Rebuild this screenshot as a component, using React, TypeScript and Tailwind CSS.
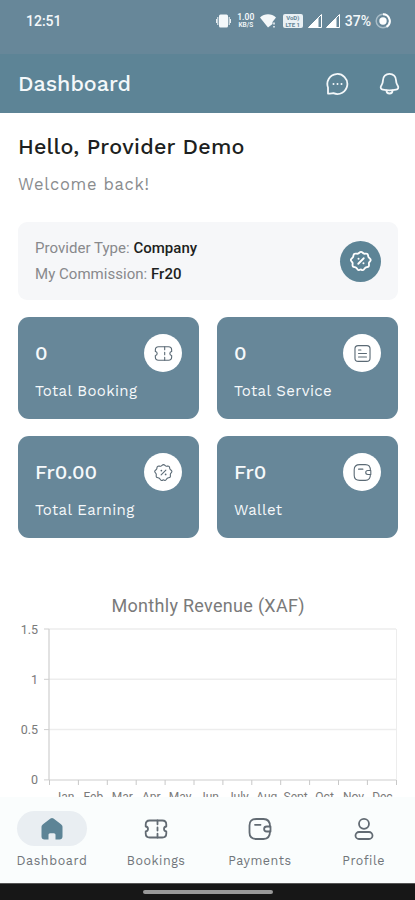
import type { ReactNode } from 'react'

const font = "font-['Work_Sans',Inter,sans-serif]"

function Icon({ size = 24, stroke = 1.5, children }: { size?: number; stroke?: number; children: ReactNode }) {
  return (
    <svg width={size} height={size} viewBox="0 0 24 24" fill="none" stroke="currentColor"
      strokeWidth={stroke} strokeLinecap="round" strokeLinejoin="round">
      {children}
    </svg>
  )
}

const ticket = (
  <>
    <path d="M20 12c0-1.300.8-2.300 2.300-2.500V7.500c0-2.500-1-4-4-4H5.700c-3 0-4 1.500-4 4v2C3.200 9.700 4 10.700 4 12s-.8 2.300-2.300 2.500v2c0 2.500 1 4 4 4h12.600c3 0 4-1.500 4-4v-2c-1.500-.2-2.300-1.200-2.300-2.500z" />
    <path d="M13.500 3.500v3.800M13.500 10.500v3M13.500 16.700v3.800" />
  </>
)

const discount = (
  <>
    <path d="M12 2c1.500 0 2 1.600 3.300 2s2.600-.6 3.700.3.500 2.500 1.300 3.600 2.300 1.500 2.300 2.900-1.500 1.900-1.900 3.200.6 2.700-.3 3.800-2.500.7-3.600 1.500-1.400 2.500-2.800 2.700-1.600-.9-2-.9-1.200 1.100-2.600.9-1.600-1.900-2.700-2.700-2.700-.4-3.600-1.500.1-2.500-.3-3.800-1.900-1.800-1.900-3.200 1.500-1.800 2.300-2.900.2-2.700 1.300-3.600S7.400 4.400 8.700 4 10.500 2 12 2z" />
    <path d="M9 15l6-6" />
    <path d="M14.700 14.500h.01M9.300 9.500h.01" strokeWidth="2.200" />
  </>
)

const wallet = (
  <>
    <path d="M12.500 7.800H7" />
    <path d="M22.500 9.500v5h-3.700c-1.500 0-2.700-1-2.700-2.500s1.200-2.500 2.700-2.500h3.700z" />
    <path d="M22 9.500c0-5-1.500-7.500-6.500-7.500h-7c-5 0-7 2-7 6.500v7c0 4.500 2 6.500 7 6.500h7c5 0 6.500-2.500 6.500-7.500" />
  </>
)

const note = (
  <>
    <rect x="2.500" y="2" width="19" height="20" rx="4" />
    <path d="M7 7.500h3M7 12h10M7 16.500h10" />
  </>
)

const stats = [
  { value: '0', label: 'Total Booking', icon: ticket },
  { value: '0', label: 'Total Service', icon: note },
  { value: 'Fr0.00', label: 'Total Earning', icon: discount },
  { value: 'Fr0', label: 'Wallet', icon: wallet },
]

const months = ['Jan', 'Feb', 'Mar', 'Apr', 'May', 'Jun', 'July', 'Aug', 'Sept', 'Oct', 'Nov', 'Dec']
const ticks = ['1.5', '1', '0.5', '0']

function StatusBar() {
  return (
    <div className="flex h-[54px] items-start justify-between bg-[#678799] pt-[11px] pr-[24px] pl-[26px] text-[#f4f8fa]">
      <span className="font-[Roboto,sans-serif] text-[14px] leading-5 font-medium">12:51</span>
      <div className="flex h-[19px] items-center">
        <svg width="15" height="14" viewBox="0 0 15 14" fill="currentColor">
          <rect x="3" y="0.500" width="9" height="13" rx="1.500" />
          <path d="M1.800 3v8M13.200 3v8M.4 5v4M14.600 5v4" stroke="currentColor" />
        </svg>
        <div className="ml-[6px] flex w-[18px] flex-col items-center font-[Roboto,sans-serif] font-semibold">
          <span className="text-[8.500px] leading-[9px]">1.00</span>
          <span className="text-[6.500px] leading-[6px]">KB/S</span>
        </div>
        <svg className="ml-[5px]" width="17" height="14" viewBox="0 0 17 14" fill="currentColor">
          <path d="M0 3.500C4.500-.8 11.500-.8 16 3.500L12.500 8v2L8 13.500z" />
          <path d="M14 8.500v2M14 12v1.500" stroke="currentColor" strokeWidth="1.500" />
        </svg>
        <div className="ml-[6px] flex h-[14px] w-[20px] flex-col items-center justify-center rounded-[2px] bg-[#e9f0f4] font-[Roboto,sans-serif] text-[6px] leading-[7px] font-bold text-[#678799]">
          <span>VoD)</span>
          <span>LTE 1</span>
        </div>
        {[0, 1].map(i => (
          <svg key={i} className={i === 0 ? 'ml-[5px]' : 'ml-[4px]'} width="14" height="14" viewBox="0 0 14 14">
            <path d="M13.500.5v13H.5z" fill="none" stroke="white" />
            <path d="M10.500 3.500v10H.5z" fill="white" />
          </svg>
        ))}
        <span className="ml-[5px] font-[Roboto,sans-serif] text-[14px] leading-5 font-medium">37%</span>
        <svg className="ml-[4px]" width="16" height="16" viewBox="0 0 16 16" fill="none">
          <circle cx="8" cy="8" r="6.800" stroke="#a9bdc8" strokeWidth="1.500" />
          <path d="M8 1.200A6.800 6.800 0 0 1 11.500 13.800" stroke="white" strokeWidth="2" />
          <circle cx="8" cy="8" r="3.700" fill="white" />
        </svg>
      </div>
    </div>
  )
}

function Header() {
  return (
    <header className="flex h-[59px] items-center justify-between bg-[#5d8496] pr-[14px] pl-[18px] text-[#f4f8fa]">
      <h1 className="pt-[2px] text-[21.500px] font-medium">Dashboard</h1>
      <div className="flex items-center gap-[28px]">
        <Icon stroke={1.8}>
          <path d="M3 21.500V15.500A10 10 0 1 1 8.500 21.200C7 21.600 5 21.600 3 21.500z" />
          <path d="M8.500 12h.01M12.500 12h.01M16.500 12h.01" strokeWidth="2" />
        </Icon>
        <Icon stroke={1.8}>
          <path d="M12.500 1.800C8.700 1.800 6 4.600 6 8.300c0 2.700-.8 3.900-1.800 5.500-1.100 1.800-.3 3.500 1.800 3.900 4.300.8 8.700.8 13 0 2.100-.4 2.900-2.100 1.800-3.900-1-1.600-1.800-2.800-1.800-5.500 0-3.700-2.700-6.500-6.500-6.500z" />
          <path d="M15.500 18.500c0 1.800-1.300 3-3 3s-3-1.200-3-3" />
        </Icon>
      </div>
    </header>
  )
}

function RevenueChart() {
  return (
    <svg className="-mx-[18px] block" width="415" height="235" fontFamily="Roboto, sans-serif" fill="#7a7a7a">
      <text x="208" y="34" fontSize="18" textAnchor="middle" textLength="193">Monthly Revenue (XAF)</text>
      {ticks.map((t, i) => (
        <g key={t}>
          <path d={`M49 ${51 + i * 50.3}H396`} stroke={i === 3 ? '#dedede' : '#ededed'} strokeWidth="1.500" />
          <path d={`M44 ${51 + i * 50.3}h5`} stroke="#cfcfcf" />
          <text x="38" y={55.5 + i * 50.3} fontSize="12.500" textAnchor="end">{t}</text>
        </g>
      ))}
      <path d="M396.500 51v151" stroke="#ededed" />
      <path d="M49 51v151" stroke="#cfcfcf" strokeWidth="1.200" />
      {months.map((m, i) => (
        <g key={m}>
          <path d={`M${49.5 + i * 28.9} 202v5`} stroke="#c8c8c8" />
          <text x={64.5 + i * 28.9} y="223" fontSize="12" textAnchor="middle">{m}</text>
        </g>
      ))}
      <path d="M396.500 202v5" stroke="#c8c8c8" />
    </svg>
  )
}

function BottomNav() {
  const items = [
    { label: 'Bookings', icon: ticket },
    { label: 'Payments', icon: wallet },
    {
      label: 'Profile',
      icon: (
        <>
          <circle cx="12" cy="6.800" r="5" />
          <rect x="3.500" y="15" width="17" height="7" rx="3.500" />
        </>
      ),
    },
  ]
  return (
    <nav className="grid h-[86px] shrink-0 grid-cols-4 bg-[#fafdfd] pt-[14px] text-[12.500px] text-[#70757a]">
      <div className="flex flex-col items-center">
        <div className="flex h-[35px] w-[70px] items-center justify-center rounded-full bg-[#e9eef2] text-[#5d8496]">
          <svg width="24" height="24" viewBox="0 0 24 24" fill="currentColor">
            <path d="M10.500 1.500L3 7.200C2 8 1.500 9 1.500 10v9.500c0 2 1.200 3 3 3H8.500V18c0-1 .6-1.700 1.600-1.700h3.800c1 0 1.600.7 1.600 1.700v4.500h4c1.800 0 3-1 3-3V10c0-1-.5-2-1.500-2.800l-7.500-5.700c-1-.7-2-.7-3 0z" />
          </svg>
        </div>
        <span className="mt-[7px] leading-4 tracking-[0.6px]">Dashboard</span>
      </div>
      {items.map(item => (
        <div key={item.label} className="flex flex-col items-center pl-px">
          <div className="flex h-[35px] items-center text-[#626b73]">
            <Icon stroke={1.8}>{item.icon}</Icon>
          </div>
          <span className="mt-[7px] leading-4 tracking-[0.5px]">{item.label}</span>
        </div>
      ))}
    </nav>
  )
}

export default function App() {
  return (
    <div className={`flex h-[900px] w-[415px] flex-col overflow-hidden bg-white ${font}`}>
      <StatusBar />
      <Header />
      <main className="min-h-0 flex-1 overflow-hidden pt-[20px] pr-[17px] pl-[18px]">
        <h2 className="text-[21.500px] leading-7 font-medium tracking-[0.25px] text-[#1d1f21]">Hello, Provider Demo</h2>
        <p className="mt-[12px] text-[16.500px] leading-6 tracking-[0.7px] text-[#8a8c8e]">Welcome back!</p>

        <div className="mt-[25px] flex h-[78px] items-center justify-between rounded-[9px] bg-[#f6f7f9] px-[17px] font-[Roboto,sans-serif] text-[15px] leading-[26px] text-[#88898c]">
          <div className="tracking-[0.03px]">
            <p>Provider Type: <b className="font-medium text-[#1d1f21]">Company</b></p>
            <p>My Commission: <b className="font-medium text-[#1d1f21]">Fr20</b></p>
          </div>
          <div className="flex size-[41px] items-center justify-center rounded-full bg-[#5d8496] text-white">
            <Icon size={22} stroke={2}>{discount}</Icon>
          </div>
        </div>

        <div className="mt-[17px] grid grid-cols-2 gap-x-[18px] gap-y-[17px]">
          {stats.map(s => (
            <div key={s.label} className="h-[102px] rounded-[11px] bg-[#678799] px-[17px] pt-[17px] text-[#f6f9fb]">
              <div className="flex items-center justify-between">
                <span className="text-[20px] font-medium">{s.value}</span>
                <div className="flex size-[38px] items-center justify-center rounded-full bg-white text-[#5b6a75]">
                  <Icon size={19} stroke={1.4}>{s.icon}</Icon>
                </div>
              </div>
              <p className="mt-[8px] text-[15px] leading-[22px] tracking-[0.35px]">{s.label}</p>
            </div>
          ))}
        </div>

        <div className="mt-[40px]">
          <RevenueChart />
        </div>
      </main>
      <BottomNav />
      <div className="flex h-[17px] shrink-0 justify-center border-t border-[#555] bg-[#171717] pt-[6px]">
        <div className="h-[4px] w-[130px] rounded-full bg-[#999]" />
      </div>
    </div>
  )
}
